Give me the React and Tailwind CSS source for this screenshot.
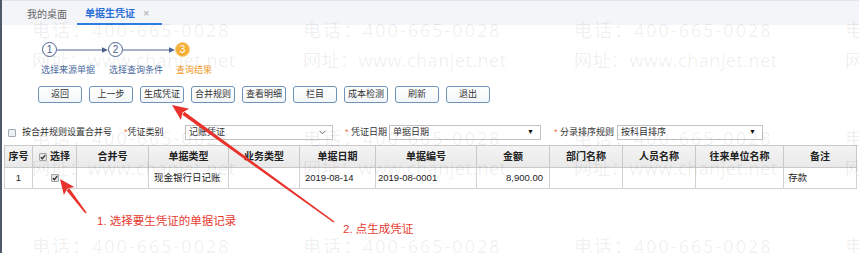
import React from "react";

const buttons = ["返回", "上一步", "生成凭证", "合并规则", "查看明细", "栏目", "成本检测", "刷新", "退出"];

function Circle({ n }) {
  return (
    <div className="w-[15px] h-[15px] rounded-full border-[1.5px] border-[#4b6290] bg-white flex items-center justify-center text-[10px] leading-none text-[#4b6290]">
      {n}
    </div>
  );
}

function StepArrow({ w }) {
  return (
    <svg width={w} height="8" viewBox={`0 0 ${w} 8`} className="block">
      <line x1="0" y1="4" x2={w - 2} y2="4" stroke="#4b6290" strokeWidth="1" />
      <polygon points={`${w - 6},1.3 ${w},4 ${w - 6},6.7`} fill="#4b6290" />
    </svg>
  );
}

function Check() {
  return (
    <span className="inline-flex w-[8px] h-[8px] border border-[#a4a4a4] bg-[#e4e4e4] rounded-[1px] items-center justify-center align-middle">
      <svg width="6" height="6" viewBox="0 0 6 6" className="block">
        <path d="M0.8 3.1 L2.3 4.7 L5.3 1.1" stroke="#2b2b2b" strokeWidth="1.3" fill="none" />
      </svg>
    </span>
  );
}

function RedArrow({ tx, ty, hx, hy, head = 15, half = 6.5, shaft = 3.2 }) {
  const dx = hx - tx;
  const dy = hy - ty;
  const len = Math.hypot(dx, dy);
  const ux = dx / len;
  const uy = dy / len;
  const nx = -uy;
  const ny = ux;
  const bx = hx - ux * head;
  const by = hy - uy * head;
  const p = (x, y) => `${x.toFixed(1)},${y.toFixed(1)}`;
  const shaftPts = [
    p(tx + nx * 0.8, ty + ny * 0.8),
    p(bx + ux * 2 + nx * (shaft / 2), by + uy * 2 + ny * (shaft / 2)),
    p(bx + ux * 2 - nx * (shaft / 2), by + uy * 2 - ny * (shaft / 2)),
    p(tx - nx * 0.8, ty - ny * 0.8),
  ].join(" ");
  const headPts = [
    p(hx, hy),
    p(bx + nx * half, by + ny * half),
    p(bx + ux * 3, by + uy * 3),
    p(bx - nx * half, by - ny * half),
  ].join(" ");
  return (
    <g fill="#e8322b">
      <polygon points={shaftPts} />
      <polygon points={headPts} />
    </g>
  );
}

function Select({ w, text, arrow }) {
  return (
    <div className={`${w} h-[15px] border border-[#c2c2c2] bg-white flex items-center justify-between pl-[3px] pr-[6px]`}>
      <span>{text}</span>
      {arrow === "chev" ? (
        <svg width="7" height="5" viewBox="0 0 7 5" className="block">
          <path d="M0.5 0.8 L3.5 3.8 L6.5 0.8" stroke="#666" strokeWidth="1" fill="none" />
        </svg>
      ) : (
        <span className="text-[7px] text-[#111]">▼</span>
      )}
    </div>
  );
}

export default function App() {
  const headers = ["序号", "选择", "合并号", "单据类型", "业务类型", "单据日期", "单据编号", "金额", "部门名称", "人员名称", "往来单位名称", "备注"];
  return (
    <div className="relative w-[859px] h-[253px] overflow-hidden bg-white flex font-['Liberation_Sans','Noto_Sans_CJK_SC',sans-serif] text-[#333]">
      <div className="w-[2px] shrink-0 bg-[#4f5968]" />
      <div className="flex-1 min-w-0">
        {/* tab bar */}
        <div className="h-[25px] bg-[#f3f5f9] border-t border-[#e1e5eb] flex items-stretch text-[10px]">
          <div className="ml-[25px] flex items-center pt-[3px] text-[#666]">我的桌面</div>
          <div className="ml-[10px] w-[85px] flex items-center pt-[3px] pl-[8px] border-b-2 border-[#2f7de1] text-[#2a6fd8] font-bold">
            单据生凭证
            <span className="ml-[8px] font-normal text-[#aaa] text-[11px]">×</span>
          </div>
        </div>

        {/* steps */}
        <div className="mt-[17px] ml-[40px] flex items-center h-[15px]">
          <Circle n="1" />
          <StepArrow w={51} />
          <Circle n="2" />
          <StepArrow w={52} />
          <div className="w-[15px] h-[15px] rounded-full border-[1.5px] border-[#fad27e] bg-[#f5ae36] flex items-center justify-center text-[10px] leading-none text-white">
            3
          </div>
        </div>
        <div className="mt-[7px] flex text-[9px] leading-[12px]">
          <span className="ml-[39px] w-[68px] text-[#4a6a9c]">选择来源单据</span>
          <span className="w-[67px] text-[#4a6a9c]">选择查询条件</span>
          <span className="text-[#ef9b2a]">查询结果</span>
        </div>

        {/* buttons */}
        <div className="mt-[10px] ml-[36px] flex gap-[7px]">
          {buttons.map((b) => (
            <div
              key={b}
              className="w-[44px] h-[17px] border border-[#6d93bb] rounded-[3px] bg-gradient-to-b from-white to-[#f3f6f9] flex items-center justify-center text-[9px] text-[#333]"
            >
              {b}
            </div>
          ))}
        </div>

        {/* filter row */}
        <div className="mt-[22px] flex items-center h-[15px] text-[9px] text-[#333]">
          <span className="ml-[6px] w-[8px] h-[8px] border border-[#a3a9b2] bg-[#eceff3] rounded-[1px]" />
          <span className="ml-[6px] w-[100px]">按合并规则设置合并号</span>
          <span className="w-[63px] pl-[2px]">
            <span className="text-[#f0703c]">*</span>凭证类别
          </span>
          <Select w="w-[148px]" text="记账凭证" arrow="chev" />
          <span className="w-[56px] text-right pr-[2px]">
            <span className="text-[#f0703c]">*</span> 凭证日期
          </span>
          <Select w="w-[152px]" text="单据日期" />
          <span className="w-[76px] text-right pr-[3px]">
            <span className="text-[#f0703c]">*</span> 分录排序规则
          </span>
          <Select w="w-[146px]" text="按科目排序" />
        </div>

        {/* table */}
        <table className="mt-[5px] ml-[2px] w-[852px] table-fixed border-collapse text-[9.5px] text-[#222]">
          <colgroup>
            <col className="w-[28px]" />
            <col className="w-[44px]" />
            <col className="w-[72px]" />
            <col className="w-[80px]" />
            <col className="w-[71px]" />
            <col className="w-[76px]" />
            <col className="w-[101px]" />
            <col className="w-[73px]" />
            <col className="w-[73px]" />
            <col className="w-[73px]" />
            <col className="w-[88px]" />
            <col className="w-[73px]" />
          </colgroup>
          <thead>
            <tr className="h-[22px] bg-gradient-to-b from-[#f4f4f4] to-[#e9e9e9]">
              {headers.map((h) => (
                <th key={h} className="border border-[#c9c9c9] p-0 font-bold text-[10px] text-[#222] text-center whitespace-nowrap">
                  {h === "选择" ? (
                    <span className="inline-flex items-center gap-[3px]">
                      <Check />
                      选择
                    </span>
                  ) : (
                    h
                  )}
                </th>
              ))}
            </tr>
          </thead>
          <tbody>
            <tr className="h-[21px]">
              <td className="border border-[#d2d2d2] text-center">1</td>
              <td className="border border-[#d2d2d2] text-center">
                <Check />
              </td>
              <td className="border border-[#d2d2d2]" />
              <td className="border border-[#d2d2d2] pl-[5px] whitespace-nowrap">现金银行日记账</td>
              <td className="border border-[#d2d2d2]" />
              <td className="border border-[#d2d2d2] pl-[5px]">2019-08-14</td>
              <td className="border border-[#d2d2d2] pl-[2px]">2019-08-0001</td>
              <td className="border border-[#d2d2d2] text-right pr-[6px]">8,900.00</td>
              <td className="border border-[#d2d2d2]" />
              <td className="border border-[#d2d2d2]" />
              <td className="border border-[#d2d2d2]" />
              <td className="border border-[#d2d2d2] pl-[4px]">存款</td>
            </tr>
          </tbody>
        </table>
      </div>

      {/* watermark */}
      <div className="pointer-events-none absolute inset-0 pt-[15px] pl-[32px] grid grid-cols-[repeat(4,271px)] auto-rows-[108px] font-['Open_Sans','Noto_Sans_CJK_SC',sans-serif] text-[18px] leading-[30px] text-black/[0.07]">
        {Array.from({ length: 12 }).map((_, i) => (
          <div key={i} className="whitespace-nowrap">
            <div className="tracking-[2px]">电话：400-665-0028</div>
            <div className="tracking-[0.5px]">网址：www.chanjet.net</div>
          </div>
        ))}
      </div>

      {/* annotations */}
      <svg className="pointer-events-none absolute left-0 top-0" width="859" height="253" viewBox="0 0 859 253">
        <RedArrow tx={86} ty={213} hx={60} hy={179} head={15} half={6.5} shaft={3.6} />
        <RedArrow tx={334} ty={222} hx={172} hy={105} head={16} half={7} shaft={3.6} />
      </svg>
      <div className="pointer-events-none absolute left-[97px] top-[214px] text-[11.5px] leading-[14px] text-[#e6392f] whitespace-nowrap">
        1. 选择要生凭证的单据记录
      </div>
      <div className="pointer-events-none absolute left-[343px] top-[222px] text-[11.5px] leading-[14px] text-[#e6392f] whitespace-nowrap">
        2. 点生成凭证
      </div>
    </div>
  );
}
